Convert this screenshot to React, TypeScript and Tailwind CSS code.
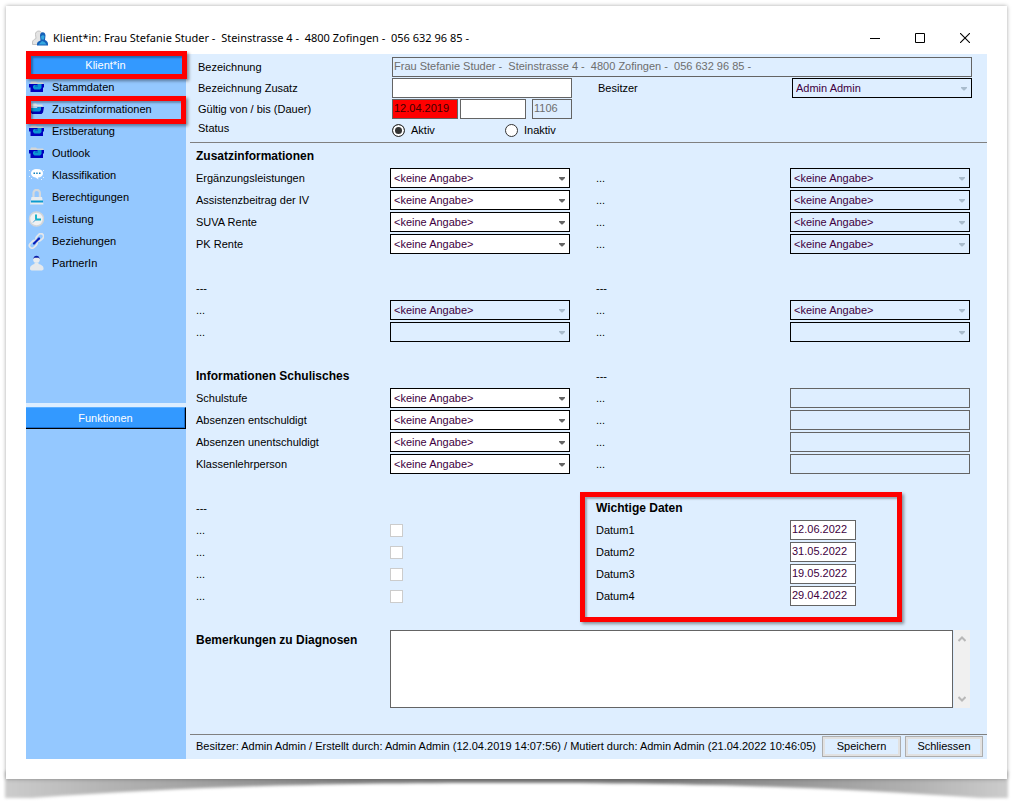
import { useId, useState } from 'react';
import type { ReactNode } from 'react';

const KEINE = '<keine Angabe>';

const FIELD = 'h-5 border border-[#646464] px-px pb-0.5 outline-none';

/* ---------- Icons ---------- */

function FolderIcon({ open = false }: { open?: boolean }) {
  if (open) {
    return (
      <svg width="16" height="16" viewBox="0 0 16 16" className="shrink-0">
        <path d="M2 4 3 2.500h5l1 1h5.500v2H2z" fill="#dfe1e3" />
        <path d="M1 5h14v3H1z" fill="#b9cfe4" />
        <path d="M1 7h8l1-1h6l-1 5.500-1.500 1.500H4L2.500 11z" fill="#0000b4" />
        <path d="M1.500 7h8l1-1h2.500v3l-1.500 1.500H4z" fill="#0a96d2" />
      </svg>
    );
  }
  return (
    <svg width="16" height="16" viewBox="0 0 16 16" className="shrink-0">
      <path d="M2 5 3 2.500h5l1 1h6l1 2H2z" fill="#d3d6d8" />
      <path d="M1 5h15v3.500h-1V13H2.500V8.500H1z" fill="#0000c0" />
      <path d="M6 6h3l1-1h3.500v4L12 10.500H6.500L5 9V7z" fill="#0a96d2" />
      <path d="M7 6.500h3v1H7z" fill="#0a46c8" />
    </svg>
  );
}

function BubbleIcon() {
  return (
    <svg width="16" height="16" viewBox="0 0 16 16" className="shrink-0">
      <path d="M9 2c4 0 6 1.700 6 4.200S13 10.500 10 10.500L10.500 12.500 7.500 10.500C4.500 10.300 3 8.500 3 6.300S5 2 9 2z" fill="#fff" />
      <g fill="#0a7fbd">
        <rect x="5.500" y="5.500" width="1.500" height="1.500" />
        <rect x="8.200" y="5.500" width="1.500" height="1.500" />
        <rect x="11" y="5.500" width="1.500" height="1.500" />
      </g>
      <g fill="#e6f2ff">
        <rect x="1" y="3" width="1" height="1" />
        <rect x="1" y="9" width="1" height="1" />
        <rect x="3" y="11" width="1" height="1" />
        <rect x="13" y="12" width="1" height="1" />
        <rect x="15" y="10" width="1" height="1" />
        <rect x="15" y="3" width="1" height="1" />
      </g>
    </svg>
  );
}

function LockIcon() {
  return (
    <svg width="16" height="16" viewBox="0 0 16 16" className="shrink-0">
      <path d="M5.500 9V4a3.200 3.200 0 0 1 6.400 0V9" fill="none" stroke="#d5d9dd" strokeWidth="2.200" />
      <path d="M3.500 8h10.500l1.500 7.500H2z" fill="#e8ecef" />
      <rect x="3" y="11.500" width="12" height="2" fill="#0a9bd0" />
    </svg>
  );
}

function ClockIcon() {
  return (
    <svg width="16" height="16" viewBox="0 0 16 16" className="shrink-0">
      <circle cx="8.500" cy="8" r="7" fill="#f0f1f2" stroke="#d2d5d8" strokeWidth="1.500" />
      <path d="M8 3.500V8.500H13" fill="none" stroke="#0ab0c8" strokeWidth="1.800" />
      <path d="M8.200 8 5 11.500" stroke="#5fa8d8" strokeWidth="1" />
    </svg>
  );
}

function LinkIcon() {
  return (
    <svg width="16" height="16" viewBox="0 0 16 16" className="shrink-0">
      <g fill="none" stroke="#e3e6ea" strokeWidth="1.700">
        <rect x="7.500" y="1.800" width="8.500" height="5.400" rx="2.700" transform="rotate(-45 11.700 4.500)" />
        <rect x="1" y="8.800" width="8.500" height="5.400" rx="2.700" transform="rotate(-45 5.200 11.500)" />
      </g>
      <path d="M6 10.500 11 5.500" stroke="#0a1fb8" strokeWidth="2.200" strokeLinecap="round" />
    </svg>
  );
}

function PersonIcon() {
  return (
    <svg width="16" height="16" viewBox="0 0 16 16" className="shrink-0">
      <path d="M2 13c0-2 2.500-3.500 4.500-4V7.500h4V9c2.500.5 5 2 5 4v1.500l-1.500 1h-10.500L2 14.500z" fill="#e6e9ec" />
      <circle cx="8.500" cy="4.500" r="3.300" fill="#e9ecef" />
      <path d="M5.300 4c0-4.500 6.400-4.500 6.400 0L10.500 2.800h-4z" fill="#0a1fa8" />
    </svg>
  );
}

function ClientIcon() {
  return (
    <svg width="16" height="16" viewBox="0 0 16 16" className="shrink-0">
      <path d="M.5 14.500v-2.500c0-1.500 1.500-2.500 3.500-3.500L3.500 4.500C3 .500 9.500-.500 9.800 4L9.500 8v6.500z" fill="#e4e4e4" stroke="#b8b8b8" strokeWidth=".8" />
      <path d="M5 15.500V14c0-1.500 1-2.500 3.500-3.500L8 5.500C8 1 13.500 1 13.500 5.500L13 10c2 1 3 2 3 4v1.500z" fill="#1560b8" />
      <path d="M9 6.500c1-1.500 2.500-1.500 3.500-.5L12 9.500h-2.500z" fill="#35a8e0" />
      <path d="M6.500 14.500 10 11l2.500 1 2 2.500z" fill="#35a8e0" />
    </svg>
  );
}

/* ---------- Formularelemente ---------- */

function Label({ text, htmlFor, bold }: { text: string; htmlFor?: string; bold?: boolean }) {
  const cls = bold ? 'w-[194px] shrink-0 text-xs font-bold leading-5' : 'w-[194px] shrink-0 leading-5';
  return htmlFor ? <label htmlFor={htmlFor} className={cls}>{text}</label> : <h2 className={cls}>{text}</h2>;
}

function Dropdown({ id, value = KEINE, disabled = false }: { id: string; value?: string; disabled?: boolean }) {
  return (
    <div className="relative min-w-0 flex-1">
      <select
        id={id}
        disabled={disabled}
        className="block h-5 w-full appearance-none border border-black bg-white pr-4 pl-[3px] leading-4 text-[#400040] opacity-100 outline-none disabled:bg-[#deeeff]"
      >
        <option>{value}</option>
      </select>
      <svg
        width="6"
        height="4"
        viewBox="0 0 6 4"
        className={disabled ? 'pointer-events-none absolute top-[9px] right-[5px] text-[#a9bccd]' : 'pointer-events-none absolute top-[9px] right-[5px] text-[#646464]'}
      >
        <path d="M0 0h6v1L3.500 3.500h-1L0 1z" fill="currentColor" />
      </svg>
    </div>
  );
}

function SelectRow({ label, value, disabled }: { label: string; value?: string; disabled?: boolean }) {
  const id = useId();
  return (
    <div className="flex">
      <Label text={label} htmlFor={id} />
      <Dropdown id={id} value={value} disabled={disabled} />
    </div>
  );
}

function TextRow({ label }: { label: string }) {
  const id = useId();
  return (
    <div className="flex">
      <Label text={label} htmlFor={id} />
      <input id={id} disabled className={`${FIELD} min-w-0 flex-1 bg-[#deeeff]`} />
    </div>
  );
}

function DateRow({ label, value }: { label: string; value: string }) {
  const id = useId();
  return (
    <div className="flex">
      <Label text={label} htmlFor={id} />
      <input id={id} defaultValue={value} className={`${FIELD} w-[66px] bg-white text-[#400040]`} />
    </div>
  );
}

function CheckRow({ label }: { label: string }) {
  const id = useId();
  return (
    <div className="flex items-center">
      <Label text={label} htmlFor={id} />
      <input id={id} type="checkbox" disabled className="size-[13px] appearance-none border border-[#cccccc] bg-white" />
    </div>
  );
}

function Radio({ label, checked, onChange }: { label: string; checked: boolean; onChange: () => void }) {
  return (
    <label className="flex w-[113px] items-center gap-1.5">
      <input
        type="radio"
        name="status"
        checked={checked}
        onChange={onChange}
        className="size-[13px] appearance-none rounded-full border border-[#333333] bg-white checked:bg-[#333333] checked:shadow-[inset_0_0_0_2px_#ffffff]"
      />
      {label}
    </label>
  );
}

function Section({ children }: { children: ReactNode }) {
  return <section className="relative grid auto-rows-[20px] content-start gap-0.5">{children}</section>;
}

// Rote Markierung über einem Bereich
function Marker({ className }: { className: string }) {
  return (
    <div
      className={`${className} pointer-events-none absolute z-10 border-[5px] border-[#ff0000] shadow-[2px_2px_3px_rgba(0,0,0,0.4),inset_2px_2px_2px_rgba(0,0,0,0.3)]`}
    />
  );
}

/* ---------- Navigation ---------- */

const navItems = [
  { name: 'Stammdaten', icon: <FolderIcon /> },
  { name: 'Zusatzinformationen', icon: <FolderIcon open />, marked: true },
  { name: 'Erstberatung', icon: <FolderIcon /> },
  { name: 'Outlook', icon: <FolderIcon /> },
  { name: 'Klassifikation', icon: <BubbleIcon /> },
  { name: 'Berechtigungen', icon: <LockIcon /> },
  { name: 'Leistung', icon: <ClockIcon /> },
  { name: 'Beziehungen', icon: <LinkIcon /> },
  { name: 'PartnerIn', icon: <PersonIcon /> },
];

function NavHeader({ title }: { title: string }) {
  return (
    <button className="block h-[22px] w-full border-t border-r border-b border-t-[#5fb0ff] border-r-black border-b-black bg-[#3399ff] text-center text-white shadow-[inset_-1px_-1px_0_#1a6fd0]">
      {title}
    </button>
  );
}

function Sidebar() {
  return (
    <nav className="grid w-40 shrink-0 grid-rows-[349fr_352fr] gap-1">
      <div className="bg-[#94c8ff]">
        <div className="relative">
          <NavHeader title="Klient*in" />
          <Marker className="-inset-y-[3px] left-0 -right-px" />
        </div>
        <ul>
          {navItems.map(item => (
            <li key={item.name} className="relative">
              <button className="flex h-[22px] w-full items-center gap-2 pl-0.5 text-left">
                {item.icon}
                {item.name}
              </button>
              {item.marked && <Marker className="-top-0.5 -bottom-1 inset-x-0" />}
            </li>
          ))}
        </ul>
      </div>
      <div className="bg-[#94c8ff]">
        <NavHeader title="Funktionen" />
      </div>
    </nav>
  );
}

/* ---------- Kopfbereich ---------- */

function KopfForm() {
  const [status, setStatus] = useState('Aktiv');

  return (
    <div className="grid auto-rows-[20px] gap-px pt-[3px] pr-[15px] pb-0.5 pl-3">
      <div className="flex">
        <Label text="Bezeichnung" htmlFor="bezeichnung" />
        <input
          id="bezeichnung"
          readOnly
          value="Frau Stefanie Studer -  Steinstrasse 4 -  4800 Zofingen -  056 632 96 85 -"
          className={`${FIELD} min-w-0 flex-1 bg-[#deeeff] text-[#6d6d6d]`}
        />
      </div>
      <div className="grid grid-cols-2 gap-[26px]">
        <div className="flex">
          <Label text="Bezeichnung Zusatz" htmlFor="zusatz" />
          <input id="zusatz" className={`${FIELD} min-w-0 flex-1 bg-white`} />
        </div>
        <div className="flex">
          <Label text="Besitzer" htmlFor="besitzer" />
          <Dropdown id="besitzer" value="Admin Admin" disabled />
        </div>
      </div>
      <div className="flex">
        <Label text="Gültig von / bis (Dauer)" htmlFor="von" />
        <input id="von" defaultValue="12.04.2019" className={`${FIELD} w-[66px] bg-[#ff0000] text-[#400000]`} />
        <input aria-label="Gültig bis" className={`${FIELD} ml-0.5 w-[66px] bg-white`} />
        <input aria-label="Dauer" readOnly value="1106" className={`${FIELD} ml-1.5 w-10 bg-[#deeeff] text-[#6d6d6d]`} />
      </div>
      <fieldset className="flex">
        <legend className="float-left w-[194px] leading-4">Status</legend>
        <Radio label="Aktiv" checked={status === 'Aktiv'} onChange={() => setStatus('Aktiv')} />
        <Radio label="Inaktiv" checked={status === 'Inaktiv'} onChange={() => setStatus('Inaktiv')} />
      </fieldset>
    </div>
  );
}

export default function App() {
  return (
    <div className="min-h-screen overflow-hidden bg-white pt-1.5 pr-3.5 pl-1.5 font-['Liberation_Sans',Arial,sans-serif] text-[11px] text-black">
      <div className="relative z-10 bg-white px-5 pt-4 pb-5 shadow-[0_0_4px_rgba(0,0,0,0.35)]">
        {/* Titelleiste */}
        <header className="flex h-8 items-center pl-1.5">
          <ClientIcon />
          <h1 className="ml-[5px] flex-1 whitespace-pre font-['Noto_Sans',sans-serif]">
            Klient*in: Frau Stefanie Studer -  Steinstrasse 4 -  4800 Zofingen -  056 632 96 85 -
          </h1>
          <button aria-label="Minimieren" className="flex h-8 w-[45px] items-center justify-center">
            <svg width="10" height="10" viewBox="0 0 10 10"><path d="M0 5.500h10" stroke="#000" /></svg>
          </button>
          <button aria-label="Maximieren" className="flex h-8 w-[45px] items-center justify-center">
            <svg width="10" height="10" viewBox="0 0 10 10"><path d="M.5.5h9v9h-9z" fill="none" stroke="#000" /></svg>
          </button>
          <button aria-label="Fenster schliessen" className="flex h-8 w-[45px] items-center justify-center">
            <svg width="10" height="10" viewBox="0 0 10 10"><path d="M0 0l10 10M10 0 0 10" stroke="#000" strokeWidth="1.100" /></svg>
          </button>
        </header>

        <div className="flex bg-[#deeeff]">
          <Sidebar />

          <main className="min-w-0 flex-1">
            <KopfForm />

            <div className="ml-1 border-t border-[#808080]" />

            <div className="grid grid-cols-2 gap-x-[26px] gap-y-6 pt-[3px] pr-[17px] pb-[26px] pl-2.5">
              <Section>
                <Label text="Zusatzinformationen" bold />
                <SelectRow label="Ergänzungsleistungen" />
                <SelectRow label="Assistenzbeitrag der IV" />
                <SelectRow label="SUVA Rente" />
                <SelectRow label="PK Rente" />
              </Section>
              <Section>
                <div />
                <SelectRow label="..." disabled />
                <SelectRow label="..." disabled />
                <SelectRow label="..." disabled />
                <SelectRow label="..." disabled />
              </Section>

              <Section>
                <Label text="---" />
                <SelectRow label="..." disabled />
                <SelectRow label="..." value="" disabled />
              </Section>
              <Section>
                <Label text="---" />
                <SelectRow label="..." disabled />
                <SelectRow label="..." value="" disabled />
              </Section>

              <Section>
                <Label text="Informationen Schulisches" bold />
                <SelectRow label="Schulstufe" />
                <SelectRow label="Absenzen entschuldigt" />
                <SelectRow label="Absenzen unentschuldigt" />
                <SelectRow label="Klassenlehrperson" />
              </Section>
              <Section>
                <Label text="---" />
                <TextRow label="..." />
                <TextRow label="..." />
                <TextRow label="..." />
                <TextRow label="..." />
              </Section>

              <Section>
                <Label text="---" />
                <CheckRow label="..." />
                <CheckRow label="..." />
                <CheckRow label="..." />
                <CheckRow label="..." />
              </Section>
              <Section>
                <Label text="Wichtige Daten" bold />
                <DateRow label="Datum1" value="12.06.2022" />
                <DateRow label="Datum2" value="31.05.2022" />
                <DateRow label="Datum3" value="19.05.2022" />
                <DateRow label="Datum4" value="29.04.2022" />
                <Marker className="-top-1.5 -bottom-4 -left-4 w-[322px]" />
              </Section>

              <div className="col-span-2 flex">
                <Label text="Bemerkungen zu Diagnosen" htmlFor="bemerkungen" bold />
                <textarea id="bemerkungen" className="block h-[78px] min-w-0 flex-1 resize-none border border-[#646464] bg-white p-0.5 outline-none" />
                <div className="ml-px flex w-4 flex-col items-center justify-between bg-[#f0f0f0] py-1.5">
                  <svg width="8" height="6" viewBox="0 0 8 6"><path d="M.5 5 4 1.500 7.500 5" fill="none" stroke="#b8b8b8" strokeWidth="2" /></svg>
                  <svg width="8" height="6" viewBox="0 0 8 6"><path d="M.5 1 4 4.500 7.500 1" fill="none" stroke="#b8b8b8" strokeWidth="2" /></svg>
                </div>
              </div>
            </div>

            {/* Fusszeile */}
            <footer className="ml-1 flex h-[25px] items-start border-t border-[#808080] pt-px pr-1 pl-1.5">
              <p className="min-w-0 flex-1 truncate leading-5">
                Besitzer: Admin Admin / Erstellt durch: Admin Admin (12.04.2019 14:07:56) / Mutiert durch: Admin Admin (21.04.2022 10:46:05)
              </p>
              <button className="h-[21px] w-[79px] border border-[#adadad] shadow-[inset_0_0_0_2px_#e1e1e1]">Speichern</button>
              <button className="ml-1 h-[21px] w-[78px] border border-[#adadad] shadow-[inset_0_0_0_2px_#e1e1e1]">Schliessen</button>
            </footer>
          </main>
        </div>
      </div>

      {/* Gewölbter Schatten unter dem Blatt */}
      <svg className="block h-6 w-full overflow-visible" viewBox="0 0 1001 24" preserveAspectRatio="none" aria-hidden="true">
        <defs>
          <linearGradient id="schatten">
            <stop offset="0" stopColor="#cccccc" />
            <stop offset=".1" stopColor="#b4b4b4" />
            <stop offset=".35" stopColor="#848484" />
            <stop offset=".65" stopColor="#7c7c7c" />
            <stop offset=".9" stopColor="#b0b0b0" />
            <stop offset="1" stopColor="#cccccc" />
          </linearGradient>
          <filter id="weich" x="-2%" y="-30%" width="104%" height="160%">
            <feGaussianBlur stdDeviation="1.500" />
          </filter>
        </defs>
        <path d="M-1-8H1002V19H975C820 8 700 4 500 4S180 8 26 19H-1z" fill="url(#schatten)" filter="url(#weich)" />
      </svg>
    </div>
  );
}
